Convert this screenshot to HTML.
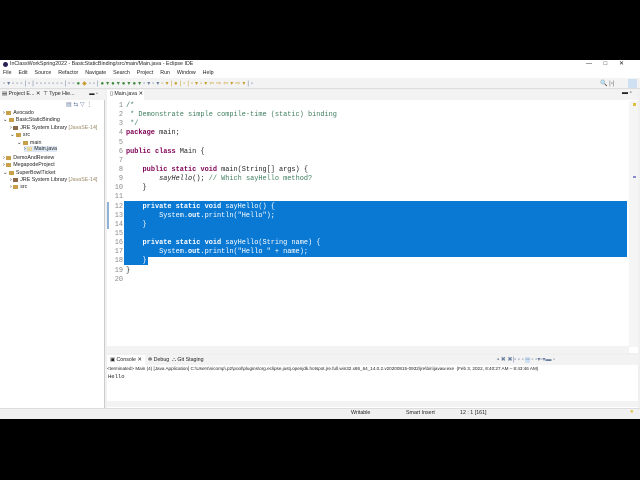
<!DOCTYPE html>
<html><head><style>
*{margin:0;padding:0;box-sizing:border-box}
body{width:640px;height:480px;background:#000;position:relative;overflow:hidden;font-family:"Liberation Sans",sans-serif;font-size:5.5px;color:#222}
.a{position:absolute}
.win{left:0;top:60px;width:640px;height:359px;background:#f0f0f0}
.code{font-family:"Liberation Mono",monospace;font-size:6.9px;white-space:pre;line-height:9.14px}
.ln{position:absolute;left:108px;width:15px;text-align:right;color:#888;font-family:"Liberation Mono",monospace;font-size:6.9px;line-height:9.14px}
.k{color:#7f0055;font-weight:bold}
.c{color:#3f7f5f}
.s{color:#2a00ff}
.sel .k,.sel .s,.sel .c{color:#fff}
.tree div{position:absolute;white-space:nowrap;font-size:5.3px}
.ic{display:inline-block;width:5px;height:4px;background:#c9a04a;margin-right:2px;vertical-align:middle}
</style></head><body>
<div class="a win"></div>
<div class="a" style="left:0;top:60px;width:640px;height:9px;background:#fff"></div>
<div class="a" style="left:3px;top:62px;width:5px;height:5px;border-radius:50%;background:#2c2255"></div>
<div class="a" style="left:10px;top:61px;font-size:5.3px">InClassWorkSpring2022 - BasicStaticBinding/src/main/Main.java - Eclipse IDE</div>
<div class="a" style="left:586px;top:60px;font-size:6px">—&nbsp;&nbsp;&nbsp;&nbsp;&nbsp;&nbsp;&nbsp;□&nbsp;&nbsp;&nbsp;&nbsp;&nbsp;&nbsp;&nbsp;✕</div>
<div class="a" style="left:0;top:69px;width:640px;height:9px;background:#fff"></div>
<div class="a" style="left:3px;top:70px;font-size:5.3px;word-spacing:2px">File&nbsp; Edit&nbsp; Source&nbsp; Refactor&nbsp; Navigate&nbsp; Search&nbsp; Project&nbsp; Run&nbsp; Window&nbsp; Help</div>
<div class="a" style="left:0;top:78px;width:640px;height:11px;background:#f3f3f3;border-bottom:1px solid #ddd"></div>
<div class="a" style="left:3px;top:80px;font-size:6px;color:#6a7fa0;letter-spacing:2px">▫▾▫▫▫|▫|▫▫▫▫▫▫▫|▫▫<span style="color:#3a8a3a">●</span><span style="color:#c8a030">◆</span>▫▫|<span style="color:#3a8a3a">●▾●▾●▾●▾</span>▫▾▫▾<span style="color:#c8a030">▫▾|●|▫|▫▾▫▾⇦⇨⇦▾⇨▾</span>|▫</div>
<div class="a" style="left:600px;top:80px;font-size:6px;color:#666">🔍&nbsp;|▫|</div>
<div class="a" style="left:628px;top:79px;width:9px;height:9px;background:#cfe0f2"></div>
<div class="a" style="left:0;top:90px;width:105px;height:318px;background:#fff;border-right:1px solid #ccc"></div>
<div class="a" style="left:0;top:90px;width:105px;height:10px;background:#f3f3f3"></div>
<div class="a" style="left:2px;top:91px;font-size:5.3px">▤ Project E... ✕ &nbsp;⊤ Type Hie...&nbsp;&nbsp;&nbsp;&nbsp;&nbsp;&nbsp;&nbsp;&nbsp;&nbsp;&nbsp;▬ ▫</div>
<div class="a" style="left:66px;top:101px;font-size:6px;color:#6a7fa0">▤ ⇆ ▽ ⋮</div>
<div class="tree">
<div class="a" style="left:3px;top:110px">› <span class="ic"></span>Avocado</div>
<div class="a" style="left:3px;top:117px">⌄ <span class="ic"></span>BasicStaticBinding</div>
<div class="a" style="left:10px;top:125px">› <span class="ic" style="background:#8a6a4a"></span>JRE System Library <span style="color:#998866">[JavaSE-14]</span></div>
<div class="a" style="left:10px;top:132px">⌄ <span class="ic"></span>src</div>
<div class="a" style="left:17px;top:140px">⌄ <span class="ic"></span>main</div>
<div class="a" style="left:24px;top:146px;background:#dfe9f5">› <span class="ic" style="background:#e8d8a0"></span>Main.java</div>
<div class="a" style="left:3px;top:155px">› <span class="ic"></span>DemoAndReview</div>
<div class="a" style="left:3px;top:162px">› <span class="ic"></span>MegapodeProject</div>
<div class="a" style="left:3px;top:170px">⌄ <span class="ic"></span>SuperBowlTicket</div>
<div class="a" style="left:10px;top:177px">› <span class="ic" style="background:#8a6a4a"></span>JRE System Library <span style="color:#998866">[JavaSE-14]</span></div>
<div class="a" style="left:10px;top:184px">› <span class="ic"></span>src</div>
</div>
<div class="a" style="left:107px;top:90px;width:531px;height:263px;background:#fff"></div>
<div class="a" style="left:107px;top:90px;width:531px;height:10px;background:#f3f3f3"></div>
<div class="a" style="left:107px;top:90px;width:37px;height:10px;background:#fff"></div>
<div class="a" style="left:110px;top:91px;font-size:5.3px">▯ Main.java ✕</div>
<div class="a" style="left:622px;top:90px;font-size:6px">▬ ▫</div>
<div class="a" style="left:629px;top:101px;width:9px;height:246px;background:#f5f5f5"></div>
<div class="a" style="left:633px;top:103px;width:3px;height:3px;background:#e0c040"></div>
<div class="a" style="left:633px;top:176px;width:3px;height:2px;background:#8888cc"></div>
<div class="a" style="left:107px;top:346px;width:522px;height:7px;background:#f3f3f3"></div>
<div class="a" style="left:124px;top:201px;width:503px;height:56px;background:#0a79d4"></div>
<div class="a" style="left:124px;top:256px;width:24px;height:9px;background:#0a79d4"></div>
<div class="a" style="left:107px;top:202px;width:2px;height:27px;background:#8fb2d6"></div>
<div class="ln" style="top:102px">1<br>2<br>3<br>4<br>5<br>6<br>7<br>8<br>9<br>10<br>11<br>12<br>13<br>14<br>15<br>16<br>17<br>18<br>19<br>20</div>
<div class="a code" style="left:126px;top:102px"><span class="c">/*
 * Demonstrate simple compile-time (static) binding
 */</span>
<span class="k">package</span> main;

<span class="k">public class</span> Main {

    <span class="k">public static void</span> main(String[] args) {
        <i>sayHello</i>(); <span class="c">// Which sayHello method?</span>
    }
</div>
<div class="a code sel" style="left:126px;top:202.5px;color:#fff">    <span class="k">private static void</span> sayHello() {
        System.<b>out</b>.println(<span class="s">"Hello"</span>);
    }

    <span class="k">private static void</span> sayHello(String name) {
        System.<b>out</b>.println(<span class="s">"Hello "</span> + name);
    }</div>
<div class="a code" style="left:126px;top:267px">}</div>
<div class="a" style="left:107px;top:355px;width:531px;height:10px;background:#f3f3f3"></div>
<div class="a" style="left:107px;top:355px;width:38px;height:10px;background:#fff"></div>
<div class="a" style="left:110px;top:357px;font-size:5.3px">▣ Console ✕&nbsp;&nbsp;&nbsp; ✲ Debug&nbsp; ⛬ Git Staging</div>
<div class="a" style="left:497px;top:356px;font-size:6px;color:#6a7fa0">▪ ✖ ✖|▫ ▫ ▫ <span style="background:#cfe0f2">▫▫</span> ▫ ▫▾▫▾▬ ▫</div>
<div class="a" style="left:107px;top:365px;width:531px;height:43px;background:#fff"></div>
<div class="a" style="left:107px;top:366px;font-size:4.6px;white-space:nowrap">&lt;terminated&gt; Main (4) [Java Application] C:\Users\nicomp\.p2\pool\plugins\org.eclipse.justj.openjdk.hotspot.jre.full.win32.x86_64_14.0.2.v20200815-0932\jre\bin\javaw.exe&nbsp; (Feb 3, 2022, 8:40:27 AM – 8:43:46 AM)</div>
<div class="a" style="left:108px;top:373px;font-family:'Liberation Mono',monospace;font-size:5.5px">Hello</div>
<div class="a" style="left:107px;top:401px;width:531px;height:6px;background:#f3f3f3"></div>
<div class="a" style="left:0;top:408px;width:640px;height:11px;background:#f0f0f0;border-top:1px solid #ddd"></div>
<div class="a" style="left:351px;top:410px;font-size:5.3px">Writable</div>
<div class="a" style="left:406px;top:410px;font-size:5.3px">Smart Insert</div>
<div class="a" style="left:460px;top:410px;font-size:5.3px">12 : 1 [161]</div>
<div class="a" style="left:630px;top:409px;font-size:6px;color:#e0c040">●</div>
</body></html>
